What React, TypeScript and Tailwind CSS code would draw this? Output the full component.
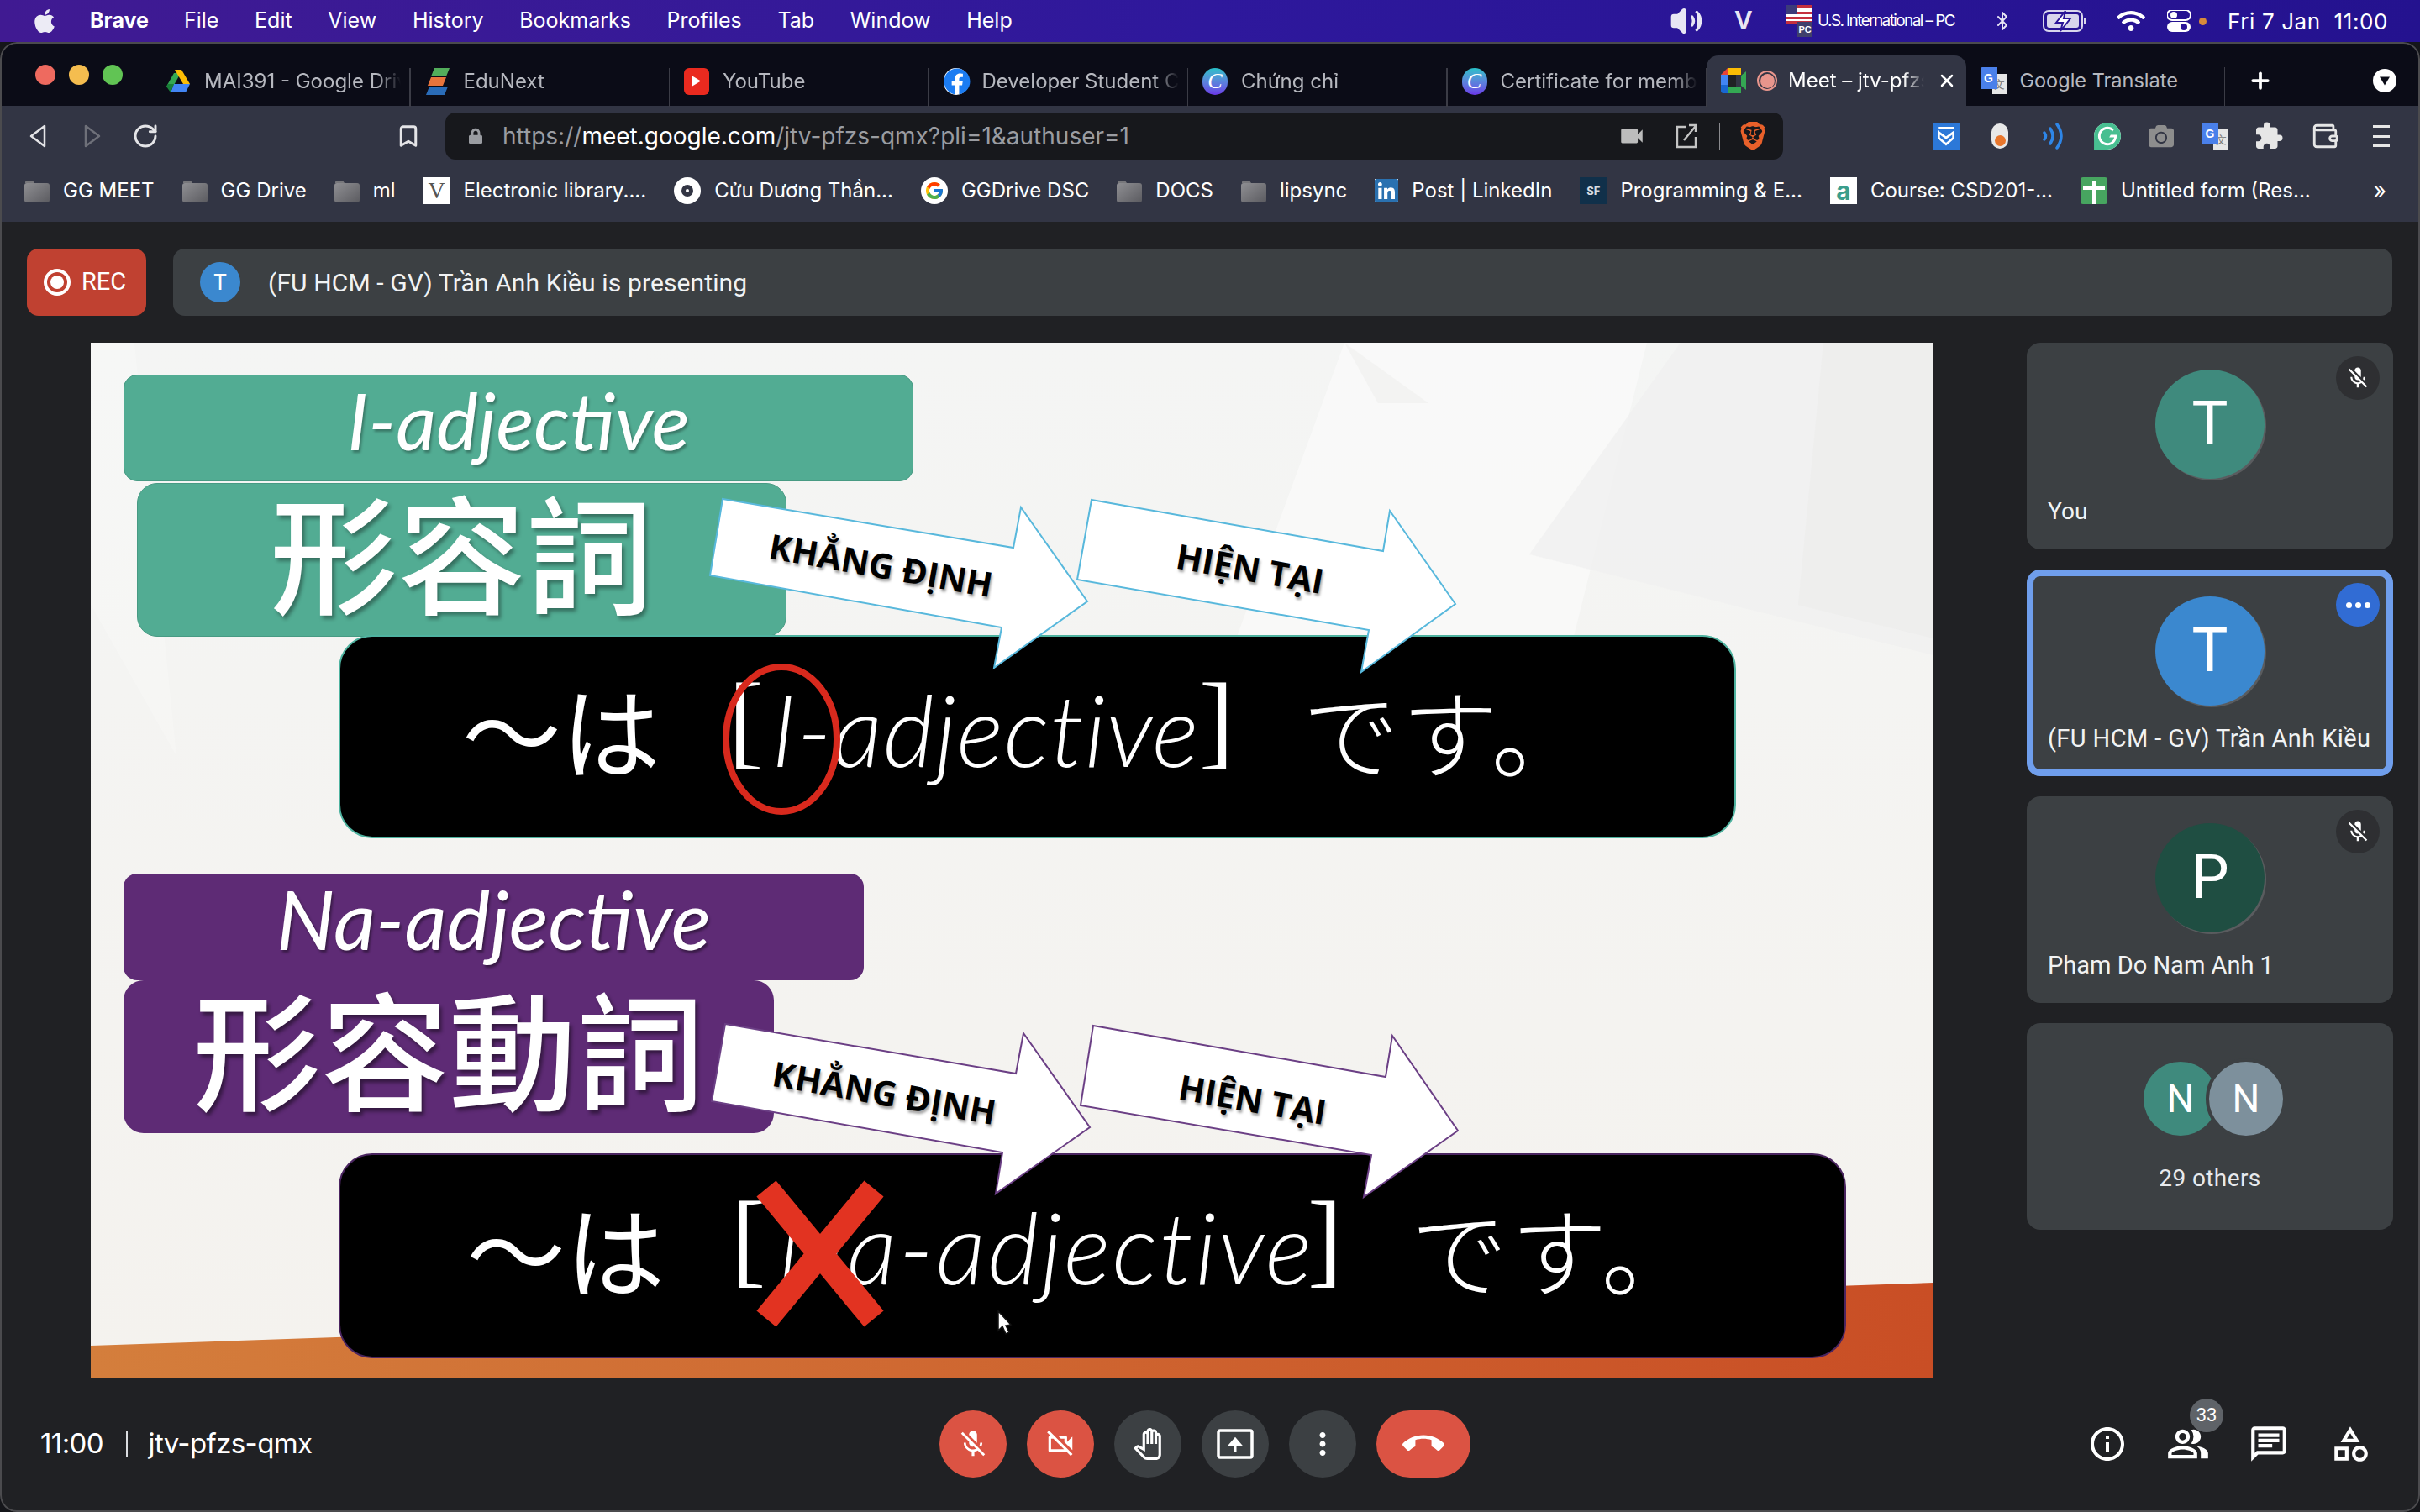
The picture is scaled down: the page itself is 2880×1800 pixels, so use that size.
import type { ReactNode } from "react";
import { Bluetooth, Bookmark, RotateCw, Wallet, X, Plus, Volume2 } from "lucide-react";
import { FaApple, FaCamera, FaFacebook, FaLinkedin, FaLock, FaWifi } from "react-icons/fa";
import { FcGoogle } from "react-icons/fc";
import { SiBrave, SiGrammarly } from "react-icons/si";
import {
    MdCallEnd,
    MdExtension,
    MdInfoOutline,
    MdMicOff,
    MdMoreVert,
    MdOutlineCategory,
    MdOutlineChat,
    MdOutlinePanTool,
    MdOutlinePeopleAlt,
    MdOutlineVideocamOff,
    MdVideocam,
} from "react-icons/md";

const SCRIPT_FONT = "font-['Lato',sans-serif] italic";
const KANJI_FONT = "font-['Noto_Sans_CJK_TC','Noto_Sans_CJK_JP',sans-serif]";
const KANA_FONT = "font-['Noto_Sans_CJK_JP',sans-serif]";

function DriveIcon() {
    return (
        <svg viewBox="0 0 28 27" className="h-[27px] w-[28px]">
            <polygon points="10,0 18,0 9,16 1,16" fill="#34a853" transform="translate(-1,4)" />
            <polygon points="10,0 18,0 28,17 20,17" fill="#fbbc04" />
            <polygon points="5,27 23,27 28,17 9,17" fill="#4285f4" />
            <polygon points="0,20 5,27 9,17 2,17" fill="#188038" />
        </svg>
    );
}

function EduNextIcon() {
    return (
        <svg viewBox="0 0 28 32" className="h-[32px] w-[28px]">
            <polygon points="10,0 28,0 24,10 6,10" fill="#52ad5b" />
            <polygon points="6,11 24,11 20,21 2,21" fill="#e8743b" />
            <polygon points="4,22 26,22 22,32 0,32" fill="#2a6cb8" />
        </svg>
    );
}

function YouTubeIcon() {
    return (
        <div className="flex h-[32px] w-[32px] items-center justify-center rounded-md bg-[#ea2a1f]">
            <svg viewBox="0 0 10 12" className="h-[13px] w-[10px]">
                <polygon points="0,0 10,6 0,12" fill="#fff" />
            </svg>
        </div>
    );
}

function FacebookIcon() {
    return (
        <div className="relative h-[32px] w-[32px] rounded-full bg-white">
            <FaFacebook className="absolute inset-0 h-[32px] w-[32px] text-[#1b7cf2]" />
        </div>
    );
}

function CanvaIcon() {
    return (
        <div className="flex h-[32px] w-[32px] items-center justify-center rounded-full bg-gradient-to-b from-[#25c0c8] to-[#6a35e8] font-['Liberation_Serif',serif] text-[26px] leading-none text-white italic">
            C
        </div>
    );
}

function MeetIcon() {
    return (
        <svg viewBox="0 0 30 30" className="h-[30px] w-[30px]">
            <polygon points="8,0 24,0 24,8 8,8" fill="#fbbc04" />
            <polygon points="8,0 8,8 0,8" fill="#ea4335" />
            <rect x="0" y="8" width="8" height="12" fill="#4285f4" />
            <path d="M0 20h8v10h-5a3 3 0 0 1-3-3z" fill="#1967d2" />
            <rect x="8" y="22" width="16" height="8" fill="#34a853" />
            <polygon points="24,9 30,4 30,26 24,21" fill="#34a853" />
            <rect x="8" y="8" width="10" height="14" fill="#202124" />
        </svg>
    );
}

function TranslateIcon() {
    return (
        <div className="relative h-[32px] w-[32px]">
            <div className="absolute right-0 bottom-0 flex h-[24px] w-[18px] items-center justify-center bg-[#e6e6e6] text-[13px] leading-none text-[#777]">
                文
            </div>
            <div className="absolute top-0 left-0 flex h-[26px] w-[20px] items-center justify-center rounded-tl-[2px] bg-[#4a80ea] font-['Liberation_Sans',sans-serif] text-[14px] font-bold text-white">
                G
            </div>
        </div>
    );
}

function FolderIcon() {
    return (
        <svg viewBox="0 0 30 27" className="h-[27px] w-[30px]">
            <defs>
                <linearGradient id="folderFill" x1="0" y1="0" x2="1" y2="1">
                    <stop offset="0" stopColor="#8f8f93" />
                    <stop offset="1" stopColor="#5b5b60" />
                </linearGradient>
            </defs>
            <path d="M1 3a2 2 0 0 1 2-2h7l2 3H1z" fill="#77777b" />
            <rect x="0" y="4" width="30" height="23" rx="3" fill="url(#folderFill)" />
        </svg>
    );
}

const TABS: { title: string; icon: ReactNode }[] = [
    { title: "MAI391 - Google Drive", icon: <DriveIcon /> },
    { title: "EduNext", icon: <EduNextIcon /> },
    { title: "YouTube", icon: <YouTubeIcon /> },
    { title: "Developer Student Clubs", icon: <FacebookIcon /> },
    { title: "Chứng chỉ", icon: <CanvaIcon /> },
    { title: "Certificate for members", icon: <CanvaIcon /> },
];

function Tab({ title, icon }: { title: string; icon: ReactNode }) {
    return (
        <div className="flex h-[60px] w-[308.5px] items-center pt-[1px] pl-[17px]">
            <div className="flex w-[30px] shrink-0 justify-center">{icon}</div>
            <div className="ml-[16px] w-[234px] overflow-hidden text-[24px] whitespace-nowrap text-[#b6b8bf] [mask-image:linear-gradient(to_right,black_88%,transparent)]">
                {title}
            </div>
            <div className="mt-[14px] ml-auto h-[46px] w-[1.5px] shrink-0 bg-[#3b3c46]" />
        </div>
    );
}

function TabStrip() {
    return (
        <div className="flex h-[76px] items-end bg-[#0b0c17] font-['Inter',sans-serif]">
            <div className="flex h-[76px] w-[180px] shrink-0 items-start gap-[16px] pt-[27px] pl-[42px]">
                <div className="h-[24px] w-[24px] rounded-full bg-[#ee6a5f]" />
                <div className="h-[24px] w-[24px] rounded-full bg-[#f5bd4f]" />
                <div className="h-[24px] w-[24px] rounded-full bg-[#61c454]" />
            </div>
            {TABS.map((t) => (
                <Tab key={t.title} title={t.title} icon={t.icon} />
            ))}
            <div className="flex h-[60px] w-[308.5px] items-center rounded-t-[14px] bg-[#323544] pl-[17px]">
                <MeetIcon />
                <div className="ml-[13px] flex h-[24px] w-[24px] shrink-0 items-center justify-center rounded-full border-2 border-[#e8958c]">
                    <div className="h-[17px] w-[17px] rounded-full bg-[#e8958c]" />
                </div>
                <div className="ml-[13px] w-[162px] overflow-hidden text-[24px] whitespace-nowrap text-white [mask-image:linear-gradient(to_right,black_85%,transparent)]">
                    Meet – jtv-pfzs-qmx
                </div>
                <X className="ml-[15px] h-[24px] w-[24px] text-white" strokeWidth={2.5} />
            </div>
            <div className="flex h-[60px] w-[308.5px] items-center pl-[17px]">
                <TranslateIcon />
                <div className="ml-[15px] text-[23.5px] whitespace-nowrap text-[#b6b8bf]">Google Translate</div>
                <div className="mt-[14px] ml-auto h-[46px] w-[1.5px] bg-[#3b3c46]" />
            </div>
            <div className="flex h-[60px] flex-1 items-center pl-[27px]">
                <Plus className="h-[30px] w-[30px] text-white" strokeWidth={3} />
                <div className="ml-[119px] flex h-[28px] w-[28px] items-center justify-center rounded-full bg-white">
                    <svg viewBox="0 0 12 10" className="h-[11px] w-[12px]">
                        <polygon points="0,0 12,0 6,10" fill="#0b0c17" />
                    </svg>
                </div>
            </div>
        </div>
    );
}

function ToolbarRow() {
    return (
        <div className="flex h-[64px] items-center bg-[#323544] pt-[8px] font-['Inter',sans-serif]">
            <svg viewBox="0 0 20 28" className="ml-[35px] h-[28px] w-[20px]">
                <polygon points="18,2 18,26 2,14" fill="none" stroke="#e4e4e7" strokeWidth="2.5" strokeLinejoin="round" />
            </svg>
            <svg viewBox="0 0 20 28" className="ml-[45px] h-[28px] w-[20px]">
                <polygon points="2,2 2,26 18,14" fill="none" stroke="#6e7079" strokeWidth="2.5" strokeLinejoin="round" />
            </svg>
            <RotateCw className="ml-[37px] h-[32px] w-[32px] text-[#e4e4e7]" strokeWidth={2.2} />
            <Bookmark className="ml-[282px] h-[30px] w-[30px] text-[#e4e4e7]" strokeWidth={2.4} />
            <div className="ml-[29px] flex h-[56px] w-[1592px] items-center rounded-[12px] bg-[#17181c]">
                <FaLock className="ml-[28px] h-[20px] w-[16px] text-[#9a9ca1]" />
                <div className="ml-[24px] text-[28px] whitespace-nowrap text-[#9a9ca1]">
                    https://<span className="text-white">meet.google.com</span>/jtv-pfzs-qmx?pli=1&amp;authuser=1
                </div>
                <MdVideocam className="ml-auto h-[34px] w-[34px] text-[#bcbcbc]" />
                <svg viewBox="0 0 26 30" className="ml-[35px] h-[30px] w-[26px]" fill="none" stroke="#c4c4c4" strokeWidth="2.4">
                    <path d="M12 4H2v24h22V16" />
                    <path d="M10 20 24 3M16 2h8v8" />
                </svg>
                <div className="ml-[26px] h-[32px] w-[1.5px] bg-[#8a8a8e]" />
                <SiBrave className="mr-[19px] ml-[22px] h-[36px] w-[34px] text-[#e8602a]" />
            </div>
            <div className="ml-[178px] flex h-[32px] w-[32px] items-center justify-center bg-[#2c78d8]">
                <svg viewBox="0 0 24 24" className="h-[26px] w-[26px]" fill="none" stroke="#fff" strokeWidth="2.5">
                    <path d="M3 3h18M4 8v6l8 7 8-7V8l-8 6z" />
                </svg>
            </div>
            <div className="ml-[38px] flex h-[30px] w-[20px] items-end justify-center rounded-full bg-[#e8e8e8] pb-[3px]">
                <div className="h-[13px] w-[13px] rounded-full bg-[#e8762c]" />
            </div>
            <svg viewBox="0 0 27 32" className="ml-[40px] h-[32px] w-[27px]" fill="none" stroke="#2e86e8" strokeWidth="3.5" strokeLinecap="round">
                <path d="M3 12q3 4 0 8M10 7q6 9 0 18M18 2q10 14 0 28" />
            </svg>
            <div className="ml-[35px] flex h-[32px] w-[32px] items-center justify-center rounded-full bg-white">
                <SiGrammarly className="h-[32px] w-[32px] text-[#48bf91]" />
            </div>
            <FaCamera className="ml-[33px] h-[30px] w-[30px] text-[#8d8d8d]" />
            <div className="ml-[33px]">
                <TranslateIcon />
            </div>
            <MdExtension className="ml-[30px] h-[36px] w-[36px] text-[#e6e6e6]" />
            <Wallet className="ml-[32px] h-[34px] w-[34px] text-[#e6e6e6]" strokeWidth={2} />
            <div className="ml-[40px] flex h-[26px] w-[20px] flex-col justify-between">
                <div className="h-[3px] bg-[#e6e6e6]" />
                <div className="h-[3px] bg-[#e6e6e6]" />
                <div className="h-[3px] bg-[#e6e6e6]" />
            </div>
        </div>
    );
}

const BOOKMARKS: { label: string; icon: ReactNode }[] = [
    { label: "GG MEET", icon: <FolderIcon /> },
    { label: "GG Drive", icon: <FolderIcon /> },
    { label: "ml", icon: <FolderIcon /> },
    {
        label: "Electronic library....",
        icon: (
            <div className="flex h-[32px] w-[32px] items-center justify-center bg-white font-['Liberation_Serif',serif] text-[28px] leading-none text-[#555]">
                V
            </div>
        ),
    },
    {
        label: "Cửu Dương Thần...",
        icon: (
            <div className="flex h-[32px] w-[32px] items-center justify-center rounded-full bg-white">
                <div className="h-[14px] w-[14px] rounded-full border-[5px] border-[#323544]" />
            </div>
        ),
    },
    {
        label: "GGDrive DSC",
        icon: (
            <div className="flex h-[32px] w-[32px] items-center justify-center rounded-full bg-white">
                <FcGoogle className="h-[24px] w-[24px]" />
            </div>
        ),
    },
    { label: "DOCS", icon: <FolderIcon /> },
    { label: "lipsync", icon: <FolderIcon /> },
    {
        label: "Post | LinkedIn",
        icon: (
            <div className="flex h-[28px] w-[28px] items-center justify-center bg-white">
                <FaLinkedin className="h-[32px] w-[32px] text-[#2a71b0]" />
            </div>
        ),
    },
    {
        label: "Programming & E...",
        icon: (
            <div className="flex h-[32px] w-[32px] items-center justify-center bg-[#10304a] text-[13px] leading-none font-bold text-[#d8dde2]">
                SF
            </div>
        ),
    },
    {
        label: "Course: CSD201-...",
        icon: (
            <div className="flex h-[32px] w-[32px] items-center justify-center bg-white text-[30px] leading-none font-bold text-[#3b9e8c]">
                a
            </div>
        ),
    },
    {
        label: "Untitled form (Res...",
        icon: (
            <div className="relative h-[32px] w-[32px] rounded-[3px] bg-[#47a560]">
                <div className="absolute top-[4px] bottom-0 left-[14px] w-[4px] bg-white" />
                <div className="absolute top-[11px] right-[3px] left-[3px] h-[4px] bg-white" />
            </div>
        ),
    },
];

function BookmarksRow() {
    return (
        <div className="flex h-[74px] items-center bg-[#323544] pr-[40px] pl-[29px] font-['Inter',sans-serif] text-[24px] text-white">
            <div className="flex items-center gap-[33px]">
                {BOOKMARKS.map((b) => (
                    <div key={b.label} className="flex items-center gap-[16px] whitespace-nowrap">
                        {b.icon}
                        <span>{b.label}</span>
                    </div>
                ))}
            </div>
            <span className="ml-auto text-[26px] leading-none">»</span>
        </div>
    );
}

function MenuBar() {
    const items = ["File", "Edit", "View", "History", "Bookmarks", "Profiles", "Tab", "Window", "Help"];
    return (
        <div className="flex h-[50px] items-center bg-gradient-to-r from-[#401a92] via-[#2e189c] to-[#24128f] font-['Inter',sans-serif] text-[25px] text-white">
            <FaApple className="ml-[38px] h-[32px] w-[30px] text-[#ecebf5]" />
            <span className="ml-[39px] font-bold">Brave</span>
            <div className="ml-[42px] flex gap-[42.7px]">
                {items.map((m) => (
                    <span key={m}>{m}</span>
                ))}
            </div>
            <div className="ml-auto flex items-center">
                <Volume2 className="h-[40px] w-[40px] fill-[#e8e6f4] text-[#e8e6f4]" />
                <span className="ml-[37px] font-['Liberation_Sans',sans-serif] text-[31px] font-bold text-[#e8e6f4]">V</span>
                <div className="relative ml-[40px] h-[38px] w-[32px]">
                    <svg viewBox="0 0 32 22" className="h-[22px] w-[32px]">
                        <rect width="32" height="22" fill="#fff" />
                        <rect y="0" width="32" height="4" fill="#c5303e" />
                        <rect y="8" width="32" height="3" fill="#c5303e" />
                        <rect y="14" width="32" height="3" fill="#c5303e" />
                        <rect y="19" width="32" height="3" fill="#c5303e" />
                        <rect width="14" height="11" fill="#3c3b7a" />
                    </svg>
                    <div className="absolute top-[20px] left-[14px] flex h-[18px] w-[18px] items-center justify-center bg-[#40406c] font-['Liberation_Sans',sans-serif] text-[11px] font-bold text-white">
                        PC
                    </div>
                </div>
                <span className="ml-[6px] w-[164px] text-[19px] tracking-[-1.6px] whitespace-nowrap">U.S. International – PC</span>
                <Bluetooth className="ml-[44px] h-[34px] w-[24px] text-[#e8e6f4]" strokeWidth={2} />
                <svg viewBox="0 0 52 26" className="ml-[36px] h-[26px] w-[52px]">
                    <rect x="1" y="1" width="46" height="24" rx="6" fill="none" stroke="#d8d6ec" strokeWidth="2" />
                    <rect x="5" y="5" width="38" height="16" rx="3" fill="#d8d6ec" />
                    <rect x="49" y="9" width="2" height="8" fill="#d8d6ec" />
                    <polygon points="27,1 16,15 24,15 21,25 33,10 25,10" fill="#fff" stroke="#2a1498" strokeWidth="2" />
                </svg>
                <FaWifi className="ml-[36px] h-[32px] w-[34px] text-white" />
                <svg viewBox="0 0 28 26" className="ml-[26px] h-[26px] w-[28px]">
                    <rect x="0" y="0" width="28" height="12" rx="6" fill="none" stroke="#fff" strokeWidth="2" />
                    <circle cx="8" cy="6" r="4" fill="#fff" />
                    <rect x="0" y="14" width="28" height="12" rx="6" fill="#fff" />
                    <circle cx="20" cy="20" r="4" fill="#2a1498" />
                </svg>
                <div className="ml-[10px] h-[9px] w-[9px] rounded-full bg-[#d88a3a]" />
                <span className="mr-[38px] ml-[25px] text-[26px] tracking-[.6px] whitespace-pre">Fri 7 Jan  11:00</span>
            </div>
        </div>
    );
}

function Arrow({ points, stroke }: { points: string; stroke: string }) {
    return <polygon points={points} fill="#fff" stroke={stroke} strokeWidth="2" strokeLinejoin="miter" />;
}

function SlideLabel({ className, children }: { className: string; children: ReactNode }) {
    return (
        <div className={`absolute whitespace-nowrap font-['Open_Sans',sans-serif] text-[41px] leading-none font-bold text-black [text-shadow:2px_3px_3px_rgba(0,0,0,.35)] ${className}`}>
            {children}
        </div>
    );
}

const BRACKET = "absolute top-[38px] font-['Liberation_Serif',serif] text-[124px] leading-none";
const BOARD_LATIN = `absolute text-[118px] leading-none font-light whitespace-nowrap ${SCRIPT_FONT}`;

// slide canvas: 2193x1232, the svg viewBox uses full-page coords
function Slide() {
    return (
        <div className="relative h-[1232px] w-[2193px] shrink-0 overflow-hidden bg-[#f5f4f1]">
            <svg viewBox="108 408 2193 1232" className="absolute inset-0 h-full w-full">
                <defs>
                    <linearGradient id="orangeBand" x1="0" y1="0" x2="1" y2="0">
                        <stop offset="0" stopColor="#d47e3c" />
                        <stop offset="1" stopColor="#c94e25" />
                    </linearGradient>
                    <linearGradient id="wash" x1="0" y1="0" x2="0" y2="1">
                        <stop offset="0" stopColor="#f4f5f4" />
                        <stop offset="1" stopColor="#f4f2ee" />
                    </linearGradient>
                </defs>
                <rect x="108" y="408" width="2193" height="1232" fill="url(#wash)" />
                <polygon points="108,408 160,408 210,900 108,720" fill="#fff" opacity=".2" />
                <polygon points="1600,408 1960,408 1830,930 1420,900" fill="#fff" opacity=".45" />
                <polygon points="1600,408 1700,480 1640,480" fill="#ededec" opacity=".5" />
                <polygon points="2000,408 2301,408 2301,780 1820,660" fill="#f0f0ef" opacity=".7" />
                <polygon points="2170,408 2301,408 2301,760 2140,720" fill="#ebebea" opacity=".5" />
                <polygon points="108,1602 2301,1527 2301,1640 108,1640" fill="url(#orangeBand)" />
            </svg>

            <div className={`absolute top-[38px] left-[39px] flex h-[127px] w-[940px] items-center justify-center rounded-[16px] border border-[#479a83] bg-[#52ac93] pb-[20px] text-[94px] leading-none text-white [text-shadow:2px_3px_3px_rgba(0,0,0,.3)] ${SCRIPT_FONT}`}>
                I-adjective
            </div>
            <div className={`absolute top-[167px] left-[55px] flex h-[183px] w-[773px] items-center justify-center rounded-[24px] border border-[#479a83] bg-[#52ac93] pb-[26px] text-[152px] leading-none font-medium text-white [text-shadow:3px_4px_4px_rgba(0,0,0,.35)] ${KANJI_FONT}`}>
                形容詞
            </div>
            <div className="absolute top-[348px] left-[295px] h-[242px] w-[1663px] rounded-[40px] border-2 border-[#4fb3a0] bg-black text-white">
                <span className={`absolute top-[50px] left-[145px] text-[118px] leading-none whitespace-nowrap ${KANA_FONT}`}>〜は</span>
                <span className={`${BRACKET} left-[462px]`}>[</span>
                <span className={`${BOARD_LATIN} top-[51px] left-[513px] tracking-[1px]`}>I-adjective</span>
                <span className={`${BRACKET} left-[1022px]`}>]</span>
                <span className={`absolute top-[53px] left-[1145px] text-[115px] leading-none font-light tracking-[3px] whitespace-nowrap ${KANA_FONT}`}>です。</span>
            </div>

            <div className={`absolute top-[632px] left-[39px] flex h-[127px] w-[881px] items-center justify-center rounded-[16px] bg-[#5e2b75] pb-[22px] text-[98px] leading-none text-white [text-shadow:2px_3px_3px_rgba(0,0,0,.4)] ${SCRIPT_FONT}`}>
                Na-adjective
            </div>
            <div className={`absolute top-[759px] left-[39px] flex h-[182px] w-[774px] items-center justify-center rounded-[24px] bg-[#5e2b75] pb-[26px] text-[152px] leading-none font-medium text-white [text-shadow:3px_4px_4px_rgba(0,0,0,.45)] ${KANJI_FONT}`}>
                形容動詞
            </div>
            <div className="absolute top-[965px] left-[295px] h-[244px] w-[1794px] rounded-[40px] border-2 border-[#4a2560] bg-black text-white">
                <span className={`absolute top-[51px] left-[150px] text-[118px] leading-none whitespace-nowrap ${KANA_FONT}`}>〜は</span>
                <span className={`${BRACKET} left-[465px]`}>[</span>
                <span className={`${BOARD_LATIN} top-[50px] left-[520px] tracking-[2.5px]`}>Na-adjective</span>
                <span className={`${BRACKET} left-[1151px]`}>]</span>
                <span className={`absolute top-[53px] left-[1274px] text-[115px] leading-none font-light tracking-[4px] whitespace-nowrap ${KANA_FONT}`}>です。</span>
            </div>

            <svg viewBox="108 408 2193 1232" className="absolute inset-0 h-full w-full">
                <Arrow points="860,594 1206,652 1215,604 1294,716 1183,795 1192,747 845,685" stroke="#58b8dc" />
                <Arrow points="1299,595 1646,656 1654,608 1732,719 1620,800 1629,750 1282,690" stroke="#58b8dc" />
                <Arrow points="863,1219 1209,1278 1218,1230 1297,1342 1185,1421 1193,1372 847,1311" stroke="#6b3f85" />
                <Arrow points="1301,1221 1649,1282 1657,1233 1735,1346 1623,1425 1632,1375 1286,1316" stroke="#6b3f85" />
                <ellipse cx="930" cy="880" rx="66" ry="86" fill="none" stroke="#d8291d" strokeWidth="8" />
                <path d="M912 1415 1040 1570M1040 1415 912 1570" stroke="#e23321" strokeWidth="30" />
                <polygon points="1188,1561 1188,1584 1193,1579 1197,1588 1201,1586 1197,1578 1203,1577" fill="#fff" stroke="#111" strokeWidth="1.5" />
            </svg>

            <SlideLabel className="top-[244px] left-[806px] rotate-[10deg]">KHẲNG ĐỊNH</SlideLabel>
            <SlideLabel className="top-[248px] left-[1291px] rotate-[10deg]">HIỆN TẠI</SlideLabel>
            <SlideLabel className="top-[872px] left-[810px] rotate-[10deg]">KHẲNG ĐỊNH</SlideLabel>
            <SlideLabel className="top-[880px] left-[1294px] rotate-[10deg]">HIỆN TẠI</SlideLabel>
        </div>
    );
}

function MutedBadge() {
    return (
        <div className="absolute top-[16px] right-[16px] flex h-[52px] w-[52px] items-center justify-center rounded-full bg-[#2e2f32]">
            <MdMicOff className="h-[30px] w-[30px] text-white" />
        </div>
    );
}

function ParticipantTile({
    letter,
    name,
    color,
    nameClass,
    active,
}: {
    letter: string;
    name: string;
    color: string;
    nameClass: string;
    active?: boolean;
}) {
    return (
        <div className={`relative h-[246px] shrink-0 rounded-[16px] bg-[#3c4043] ${active ? "outline-[8px] -outline-offset-[8px] outline-[#6f9eec]" : ""}`}>
            {active ? (
                <div className="absolute top-[16px] right-[16px] flex h-[52px] w-[52px] items-center justify-center gap-[4px] rounded-full bg-[#316cd4]">
                    <div className="h-[7px] w-[7px] rounded-full bg-white" />
                    <div className="h-[7px] w-[7px] rounded-full bg-white" />
                    <div className="h-[7px] w-[7px] rounded-full bg-white" />
                </div>
            ) : (
                <MutedBadge />
            )}
            <div className="flex justify-center pt-[32px]">
                <div className={`flex h-[130px] w-[130px] items-center justify-center rounded-full text-[72px] leading-none text-white shadow-[2px_2px_0_#5a5c5f] ${color}`}>
                    {letter}
                </div>
            </div>
            <div className={`mt-[21px] pl-[25px] leading-[36px] whitespace-nowrap text-[#f1f3f4] ${nameClass}`}>{name}</div>
        </div>
    );
}

function SidePanel() {
    return (
        <div className="ml-[111px] flex w-[436px] flex-col gap-[24px]">
            <ParticipantTile letter="T" name="You" color="bg-[#3f8a7d]" nameClass="text-[28px]" />
            <ParticipantTile letter="T" name="(FU HCM - GV) Trần Anh Kiều" color="bg-[#3b88cf]" nameClass="text-[29px] tracking-[.4px]" active />
            <ParticipantTile letter="P" name="Pham Do Nam Anh 1" color="bg-[#1f4e42]" nameClass="text-[29px]" />
            <div className="flex h-[246px] shrink-0 flex-col items-center rounded-[16px] bg-[#3c4043] pt-[46px]">
                <div className="flex pl-[12px]">
                    <div className="flex h-[88px] w-[88px] items-center justify-center rounded-full bg-[#3f8a7d] text-[46px] leading-none text-white">N</div>
                    <div className="-ml-[14px] flex h-[96px] w-[96px] -translate-y-[4px] items-center justify-center rounded-full border-[4px] border-[#3c4043] bg-[#7d909c] text-[46px] leading-none text-white">N</div>
                </div>
                <div className="mt-[25px] text-[28px] leading-[36px] tracking-[.4px] text-[#e8eaed]">29 others</div>
            </div>
        </div>
    );
}

function ControlButton({ children, danger, wide }: { children: ReactNode; danger?: boolean; wide?: boolean }) {
    return (
        <div className={`flex h-[80px] items-center justify-center rounded-full text-white ${wide ? "w-[112px]" : "w-[80px]"} ${danger ? "bg-[#db5343]" : "bg-[#3c4043]"}`}>
            {children}
        </div>
    );
}

function BottomBar() {
    return (
        <div className="flex h-[158px] items-center text-white">
            <div className="flex w-[1118px] shrink-0 items-center pl-[48px] font-['Inter',sans-serif] text-[33px]">
                <span className="w-[78px] tracking-[-.6px]">11:00</span>
                <div className="ml-[24px] h-[32px] w-[1.5px] bg-[#dadce0]" />
                <span className="ml-[25px] tracking-[-.6px]">jtv-pfzs-qmx</span>
            </div>
            <div className="flex items-center gap-[24px]">
                <ControlButton danger>
                    <MdMicOff className="h-[38px] w-[38px]" />
                </ControlButton>
                <ControlButton danger>
                    <MdOutlineVideocamOff className="h-[38px] w-[38px]" />
                </ControlButton>
                <ControlButton>
                    <MdOutlinePanTool className="h-[38px] w-[38px]" />
                </ControlButton>
                <ControlButton>
                    <svg viewBox="0 0 44 36" className="h-[36px] w-[44px]" fill="none" stroke="#fff">
                        <rect x="2" y="2" width="40" height="32" rx="2" strokeWidth="3.5" />
                        <path d="M22 27V13M16 19l6-7 6 7z" strokeWidth="3" fill="#fff" />
                    </svg>
                </ControlButton>
                <ControlButton>
                    <MdMoreVert className="h-[42px] w-[42px]" />
                </ControlButton>
                <ControlButton danger wide>
                    <MdCallEnd className="h-[50px] w-[50px]" />
                </ControlButton>
            </div>
            <div className="ml-[734px] flex items-center">
                <MdInfoOutline className="h-[48px] w-[48px]" />
                <div className="relative ml-[46px]">
                    <MdOutlinePeopleAlt className="h-[52px] w-[52px]" />
                    <div className="absolute -top-[28px] left-[28px] flex h-[40px] w-[40px] items-center justify-center rounded-full bg-[#5f6368] font-['Roboto',sans-serif] text-[22px] leading-none">33</div>
                </div>
                <MdOutlineChat className="ml-[45px] h-[50px] w-[50px]" />
                <MdOutlineCategory className="ml-[47px] h-[50px] w-[50px]" />
            </div>
        </div>
    );
}

export default function App() {
    return (
        <div className="h-[1800px] w-[2880px] overflow-hidden bg-[#15161a] font-['Roboto',sans-serif]">
            <MenuBar />
            <div className="relative h-[1750px] overflow-hidden rounded-[20px] bg-[#202124]">
                <TabStrip />
                <ToolbarRow />
                <BookmarksRow />
                <div className="flex gap-[32px] pt-[32px] pr-[33px] pl-[32px]">
                    <div className="flex h-[80px] w-[142px] items-center rounded-[14px] bg-[#c04131] pl-[20px] text-white">
                        <div className="flex h-[32px] w-[32px] items-center justify-center rounded-full border-[4px] border-white">
                            <div className="h-[16px] w-[16px] rounded-full bg-white" />
                        </div>
                        <span className="ml-[13px] text-[29px]">REC</span>
                    </div>
                    <div className="flex h-[80px] flex-1 items-center rounded-[14px] bg-[#3c4043] pl-[32px] text-[#f1f3f4]">
                        <div className="flex h-[48px] w-[48px] items-center justify-center rounded-full bg-[#3b88cf] text-[26px] text-white">T</div>
                        <span className="ml-[33px] text-[30px] tracking-[.12px]">(FU HCM - GV) Trần Anh Kiều is presenting</span>
                    </div>
                </div>
                <div className="flex pt-[32px] pl-[108px]">
                    <Slide />
                    <SidePanel />
                </div>
                <BottomBar />
                <div className="pointer-events-none absolute inset-0 rounded-[20px] border-2 border-[#4b4b4e]" />
            </div>
        </div>
    );
}
